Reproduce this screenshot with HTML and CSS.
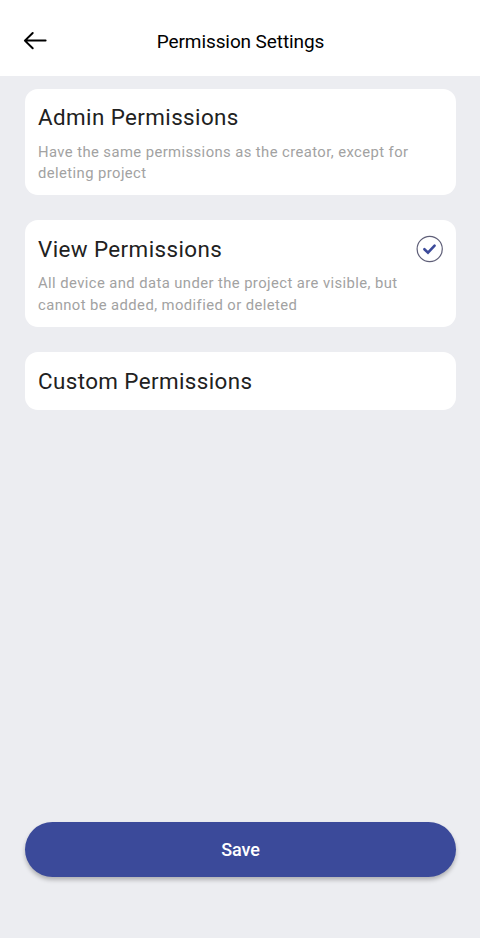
FILE: index.html
```html
<!DOCTYPE html>
<html lang="en">
<head>
<meta charset="utf-8">
<title>Permission Settings</title>
<link rel="stylesheet" href="styles.css">
</head>
<body>
<header class="bar">
  <button class="back" aria-label="Back"><svg width="24" height="20" viewBox="0 0 24 20"><path d="M9.7 2 1.9 9.6l7.8 7.6M2 9.6H22.6"/></svg></button>
  <h1 class="title">Permission Settings</h1>
</header>
<main class="list">
  <section class="card">
    <h2>Admin Permissions</h2>
    <p>Have the same permissions as the creator, except for<br>deleting project</p>
  </section>
  <section class="card">
    <div class="row">
      <h2>View Permissions</h2>
      <svg class="check" width="28" height="28" viewBox="0 0 28 28"><circle cx="13.7" cy="14" r="12.6"/><path d="m8.4 14.2 3.6 3.5 6.6-7"/></svg>
    </div>
    <p>All device and data under the project are visible, but<br>cannot be added, modified or deleted</p>
  </section>
  <section class="card short">
    <h2>Custom Permissions</h2>
  </section>
</main>
<button class="save">Save</button>
</body>
</html>
```

FILE: styles.css
```css
* { box-sizing: border-box; }
body {
  margin: 0;
  height: 938px;
  display: flex;
  flex-direction: column;
  background: #ecedf1;
  font-family: Roboto, sans-serif;
}
.bar {
  height: 76px;
  padding: 6px 22px 0 23px;
  display: grid;
  grid-template-columns: 24px 1fr 24px;
  align-items: center;
  background: #fff;
}
.back { display: flex; padding: 0; border: 0; background: none; }
.back svg { fill: none; stroke: #000; stroke-width: 2; stroke-linecap: round; stroke-linejoin: round; }
.title { margin: 1px 0 0; text-align: center; font-size: 19px; font-weight: 400; line-height: 25px; letter-spacing: -.1px; color: #000; }
.list { flex: 1; padding: 12.8px 24px 0 25px; display: flex; flex-direction: column; gap: 25.5px; }
.card { height: 106.2px; padding: 13.5px 13px 13px; border-radius: 13px; background: #fff; }
.short { height: 57.5px; }
.row { display: flex; justify-content: space-between; height: 31px; }
h2 { margin: 0; font-size: 22.4px; font-weight: 400; line-height: 31px; letter-spacing: .4px; color: #212121; }
p { margin: 8.5px 0 0; font-size: 14.8px; line-height: 21.3px; letter-spacing: .42px; color: #a2a2a2; white-space: nowrap; }
.check { margin: 1px -1px 0 0; fill: none; stroke: #5f5f78; stroke-width: 1.2; }
.check path { stroke: #3b4a9a; stroke-width: 2.6; stroke-linecap: round; }
.save {
  margin: 0 24px 61px 25px;
  height: 55px;
  border: 0;
  border-radius: 28px;
  background: #3b4a9a;
  color: #fff;
  font: 500 18px/24px Roboto, sans-serif;
  letter-spacing: -.1px;
  box-shadow: 0 3px 4px rgba(0,0,0,.25);
}
```
